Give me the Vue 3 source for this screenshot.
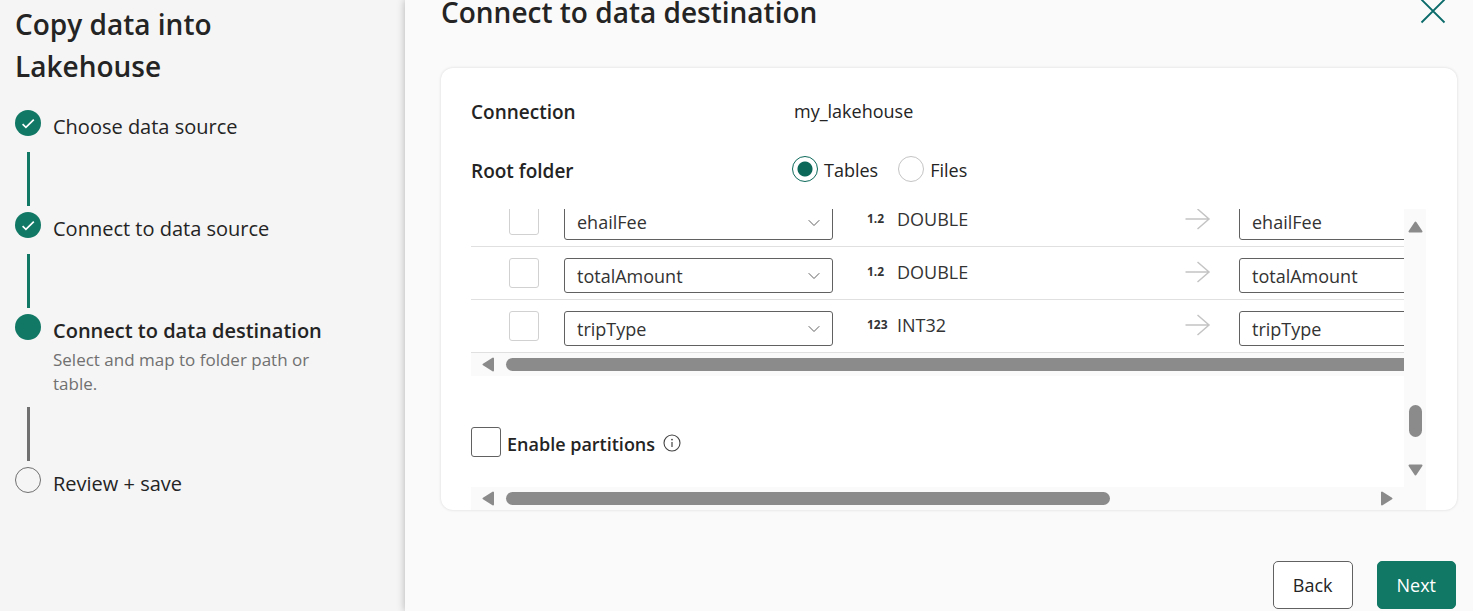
<script setup>
import { ref } from 'vue'

const steps = [
  { label: 'Choose data source', state: 'done' },
  { label: 'Connect to data source', state: 'done' },
  { label: 'Connect to data destination', state: 'current', note: 'Select and map to folder path or table.' },
  { label: 'Review + save', state: 'todo' },
]

const rows = ref([
  { name: 'ehailFee', glyph: '1.2', type: 'DOUBLE', checked: false },
  { name: 'totalAmount', glyph: '1.2', type: 'DOUBLE', checked: false },
  { name: 'tripType', glyph: '123', type: 'INT32', checked: false },
])

const folder = ref('tables')
const partitions = ref(false)
</script>

<template>
  <div class="wizard">
    <aside class="sidebar">
      <h1 class="sidebar-title">Copy data into Lakehouse</h1>
      <ol class="steps">
        <li v-for="step in steps" :key="step.label" class="step" :class="step.state">
          <div class="track">
            <span class="marker">
              <svg v-if="step.state === 'done'" width="26" height="26" viewBox="0 0 26 26" aria-hidden="true">
                <path d="M7.6 14.2 10.9 17.3 18.8 9.6" fill="none" stroke="#fff" stroke-width="1.7" />
              </svg>
            </span>
            <span class="line"></span>
          </div>
          <div class="step-text">
            <div class="step-label">{{ step.label }}</div>
            <div v-if="step.note" class="step-note">{{ step.note }}</div>
          </div>
        </li>
      </ol>
    </aside>

    <main class="main">
      <header class="header">
        <h2 class="title">Connect to data destination</h2>
        <button class="close" type="button" aria-label="Close">
          <svg width="26" height="26" viewBox="0 0 26 26" aria-hidden="true">
            <path d="M1.5 1.5 24.5 24.5M24.5 1.5 1.5 24.5" fill="none" stroke="#0b6a6a" stroke-width="1.8" />
          </svg>
        </button>
      </header>

      <section class="card">
        <div class="field">
          <span class="field-label">Connection</span>
          <span class="field-value">my_lakehouse</span>
        </div>
        <div class="field" role="radiogroup" aria-labelledby="root-folder">
          <span id="root-folder" class="field-label">Root folder</span>
          <div class="radios">
            <label class="radio"><input v-model="folder" type="radio" name="folder" value="tables" /><span>Tables</span></label>
            <label class="radio"><input v-model="folder" type="radio" name="folder" value="files" /><span>Files</span></label>
          </div>
        </div>

        <div class="scroller">
          <div class="pane">
            <div class="table-clip">
              <table class="mapping">
                <colgroup>
                  <col class="col-check" /><col class="col-source" /><col class="col-type" /><col class="col-arrow" /><col class="col-target" />
                </colgroup>
                <tbody>
                  <tr v-for="row in rows" :key="row.name">
                    <td class="check-cell"><input v-model="row.checked" class="box" type="checkbox" :aria-label="'Select ' + row.name" /></td>
                    <td>
                      <div class="combo">
                        <select :aria-label="'Source ' + row.name"><option>{{ row.name }}</option></select>
                        <svg class="chevron" width="12" height="8" viewBox="0 0 12 8" aria-hidden="true">
                          <path d="M.7 1.2 6 6.5 11.3 1.2" fill="none" stroke="#616161" stroke-width="1" />
                        </svg>
                      </div>
                    </td>
                    <td><div class="type"><span class="glyph">{{ row.glyph }}</span><span>{{ row.type }}</span></div></td>
                    <td>
                      <svg class="arrow" width="26" height="22" viewBox="0 0 26 22" aria-hidden="true">
                        <path d="M.5 11H24M12.5 1 24 11 12.5 21" fill="none" stroke="#c4c4c4" stroke-width="1.5" />
                      </svg>
                    </td>
                    <td>
                      <div class="combo">
                        <select :aria-label="'Destination ' + row.name"><option>{{ row.name }}</option></select>
                      </div>
                    </td>
                  </tr>
                </tbody>
              </table>
            </div>
            <div class="hbar inner">
              <svg width="12" height="15" viewBox="0 0 12 15" aria-hidden="true"><path d="M11 1.5V13.5L1.5 7.5Z" fill="#8b8b8b" stroke="#8b8b8b" stroke-width="2" stroke-linejoin="round" /></svg>
              <div class="rail"><div class="thumb full"></div></div>
            </div>
            <div class="partitions">
              <label class="partition-label"><input v-model="partitions" class="box strong" type="checkbox" /><span>Enable partitions</span></label>
              <svg class="info" width="18" height="18" viewBox="0 0 18 18" aria-hidden="true">
                <circle cx="9" cy="9" r="8" fill="none" stroke="#424242" stroke-width="1.1" />
                <path d="M9 8V13" stroke="#424242" stroke-width="1.2" />
                <circle cx="9" cy="5.6" r=".9" fill="#424242" />
              </svg>
            </div>
          </div>

          <div class="vbar">
            <svg width="15" height="12" viewBox="0 0 15 12" aria-hidden="true"><path d="M1.5 10.5H13.5L7.5 1.5Z" fill="#8b8b8b" stroke="#8b8b8b" stroke-width="2" stroke-linejoin="round" /></svg>
            <div class="vrail"><div class="vthumb"></div></div>
            <svg width="15" height="12" viewBox="0 0 15 12" aria-hidden="true"><path d="M1.5 1.5H13.5L7.5 10.5Z" fill="#8b8b8b" stroke="#8b8b8b" stroke-width="2" stroke-linejoin="round" /></svg>
          </div>

          <div class="hbar outer">
            <svg width="12" height="15" viewBox="0 0 12 15" aria-hidden="true"><path d="M11 1.5V13.5L1.5 7.5Z" fill="#8b8b8b" stroke="#8b8b8b" stroke-width="2" stroke-linejoin="round" /></svg>
            <div class="rail"><div class="thumb part"></div></div>
            <svg width="12" height="15" viewBox="0 0 12 15" aria-hidden="true"><path d="M1 1.5V13.5L10.5 7.5Z" fill="#8b8b8b" stroke="#8b8b8b" stroke-width="2" stroke-linejoin="round" /></svg>
          </div>
        </div>
      </section>

      <footer class="footer">
        <button class="btn" type="button">Back</button>
        <button class="btn primary" type="button">Next</button>
      </footer>
    </main>
  </div>
</template>

<style>
body {
  margin: 0;
  background: #fafafa;
}
</style>

<style scoped>
.wizard {
  display: flex;
  min-height: 100vh;
  overflow: hidden;
  color: #242424;
  font: 18px/28px "Open Sans", "Noto Sans", sans-serif;
}
.wizard * {
  box-sizing: border-box;
}
svg {
  display: block;
  flex: none;
}

/* Step list */
.sidebar {
  flex: 0 0 405px;
  padding: 3px 64px 0 15px;
  background: #f5f5f5;
}
.sidebar-title {
  max-width: 240px;
  margin: 0;
  font-size: 28px;
  line-height: 42px;
  font-weight: 600;
}
.steps {
  margin: 23px 0 0;
  padding: 0;
  list-style: none;
}
.step {
  display: flex;
  gap: 12px;
}
.track {
  display: flex;
  flex-direction: column;
  align-items: center;
  width: 26px;
}
.marker {
  width: 26px;
  height: 26px;
  border-radius: 50%;
  background: #117865;
}
.todo .marker {
  border: 1px solid #707070;
  background: none;
}
.line {
  width: 3px;
  height: 54px;
  margin: auto 0 6px;
  background: #117865;
}
.current .line {
  background: #707070;
}
.todo .line {
  display: none;
}
.step-text {
  flex: 1;
  padding: 3px 0 71px;
}
.todo .step-text {
  padding-bottom: 0;
}
.step-label {
  font-size: 20px;
}
.current .step-label {
  font-weight: 600;
}
.step-note {
  max-width: 280px;
  margin-top: 3px;
  color: #707070;
  font-size: 17px;
  line-height: 24px;
}

/* Main panel */
.main {
  position: relative;
  flex: 1;
  min-width: 0;
  padding: 0 16px 2px 36px;
  background: #fafafa;
  box-shadow: 0 0 8px rgba(0, 0, 0, 0.28);
}
.header {
  display: flex;
  justify-content: space-between;
  height: 68px;
  padding-right: 11px;
}
.title {
  margin: 0;
  font-size: 28px;
  line-height: 24px;
  font-weight: 600;
}
.close {
  align-self: flex-start;
  margin-top: -2px;
  padding: 0;
  border: 0;
  background: none;
}
.card {
  padding: 30px 31px 0 30px;
  overflow: hidden;
  border-radius: 12px;
  background: #fff;
  box-shadow: 0 0 3px rgba(0, 0, 0, 0.14);
}
.field {
  display: flex;
  align-items: center;
  height: 28px;
  margin-bottom: 31px;
}
.field + .field {
  margin-bottom: 24px;
}
.field-label {
  flex: 0 0 321px;
  font-size: 19px;
  font-weight: 600;
}
.field-value {
  padding: 0 0 2px 2px;
}
.radios {
  display: flex;
  gap: 20px;
  padding-bottom: 4px;
}
.radio {
  display: flex;
  align-items: center;
  gap: 6px;
}
.radio span {
  padding-top: 2px;
}
.partition-label span {
  padding-top: 3px;
}
.radio input {
  appearance: none;
  width: 26px;
  height: 26px;
  margin: 0;
  border: 1px solid #c4c4c4;
  border-radius: 50%;
  background: #fff;
}
.radio input:checked {
  border-color: #0c695a;
  background: radial-gradient(circle, #0c695a 7px, #fff 8px);
}

/* Scrolling area */
.scroller {
  display: grid;
  grid-template-columns: minmax(0, 1fr) 22px;
}
.table-clip {
  display: flex;
  flex-direction: column;
  justify-content: flex-end;
  height: 144px;
  overflow: hidden;
}
.mapping {
  width: 1038px;
  table-layout: fixed;
  border-collapse: collapse;
}
.col-check { width: 93px; }
.col-source { width: 303px; }
.col-type { width: 318px; }
.col-arrow { width: 54px; }
.col-target { width: 270px; }
.mapping td {
  height: 53px;
  padding: 11px 0 0;
  border-bottom: 1px solid #e0e0e0;
  vertical-align: top;
}
.mapping .check-cell {
  padding-left: 38px;
}
.box {
  appearance: none;
  display: block;
  width: 30px;
  height: 30px;
  margin: 0;
  border: 1px solid #d1d1d1;
  border-radius: 3px;
  background: #fff;
}
.box.strong {
  border-color: #616161;
}
.combo {
  position: relative;
  width: 269px;
}
.combo select {
  appearance: none;
  display: block;
  width: 100%;
  height: 35px;
  padding: 0 40px 0 12px;
  border: 1px solid #616161;
  border-radius: 3px;
  background: #fff;
  color: #333;
  font: inherit;
}
.chevron {
  position: absolute;
  top: 14px;
  right: 13px;
}
.type {
  display: flex;
  align-items: center;
  color: #333;
}
.glyph {
  width: 30px;
  font-size: 12px;
  line-height: 24px;
  font-weight: 700;
}
.arrow {
  margin-top: 3px;
}
.hbar {
  display: flex;
  align-items: center;
  gap: 12px;
  height: 23px;
  padding-left: 11px;
  background: #fafafa;
}
.outer {
  grid-column: 1 / -1;
  padding-right: 33px;
}
.rail {
  flex: 1;
}
.thumb {
  height: 13px;
  border-radius: 7px;
  background: #8b8b8b;
}
.thumb.full {
  border-radius: 7px 0 0 7px;
}
.thumb.part {
  width: 70%;
}
.vbar {
  display: flex;
  flex-direction: column;
  align-items: center;
  padding: 12px 0 11px;
  background: #fafafa;
}
.vrail {
  display: flex;
  flex: 1;
  flex-direction: column;
  justify-content: flex-end;
  padding-bottom: 27px;
}
.vthumb {
  width: 13px;
  height: 32px;
  border-radius: 7px;
  background: #8b8b8b;
}
.partitions {
  display: flex;
  align-items: center;
  gap: 8px;
  padding: 51px 0 30px;
}
.partition-label {
  display: flex;
  align-items: center;
  gap: 6px;
  height: 30px;
  font-weight: 600;
}
.info {
  margin-top: 2px;
}

/* Actions */
.footer {
  display: flex;
  justify-content: flex-end;
  gap: 24px;
  margin-top: 51px;
  padding-right: 1px;
}
.btn {
  height: 48px;
  padding: 0 19px;
  border: 1px solid #616161;
  border-radius: 5px;
  background: #fff;
  color: #242424;
  font: inherit;
}
.btn.primary {
  border-color: #117865;
  background: #117865;
  color: #fff;
}
</style>
